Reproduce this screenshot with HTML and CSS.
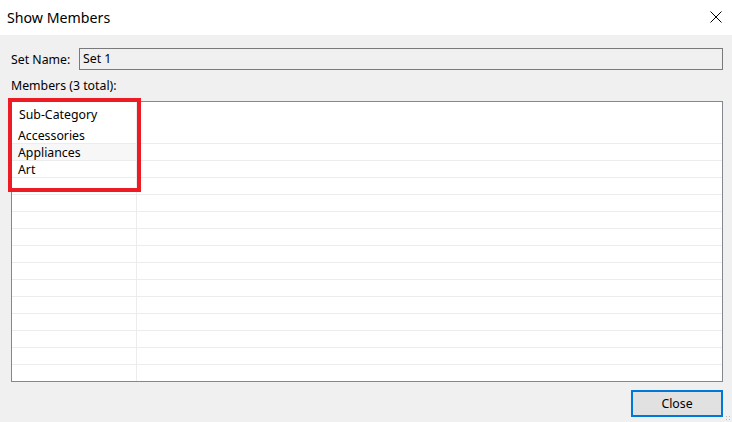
FILE: index.html
```html
<!DOCTYPE html>
<html lang="en">
<head>
  <meta charset="UTF-8" />
  <title>Show Members</title>
  <link rel="stylesheet" href="styles.css">
</head>
<body>
  <div class="dialog">
    <div class="titlebar">
      <span class="title">Show Members</span>
      <svg class="close-x" width="12" height="12" viewBox="0 0 12 12">
        <path d="M0.5 0.5 L11.5 11.5 M11.5 0.5 L0.5 11.5" stroke="#000" stroke-width="1" fill="none"/>
      </svg>
    </div>

    <div class="content">
      <div class="name-row">
        <label>Set Name:</label>
        <div class="name-box">Set 1</div>
      </div>
      <div class="members-label">Members (3 total):</div>

      <div class="grid-wrap">
        <div class="grid">
          <div class="row head"><div class="c1">Sub-Category</div><div class="c2"></div></div>
          <div class="row"><div class="c1">Accessories</div><div class="c2"></div></div>
          <div class="row alt"><div class="c1">Appliances</div><div class="c2"></div></div>
          <div class="row"><div class="c1">Art</div><div class="c2"></div></div>
          <div class="row"><div class="c1"></div><div class="c2"></div></div>
          <div class="row"><div class="c1"></div><div class="c2"></div></div>
          <div class="row"><div class="c1"></div><div class="c2"></div></div>
          <div class="row"><div class="c1"></div><div class="c2"></div></div>
          <div class="row"><div class="c1"></div><div class="c2"></div></div>
          <div class="row"><div class="c1"></div><div class="c2"></div></div>
          <div class="row"><div class="c1"></div><div class="c2"></div></div>
          <div class="row"><div class="c1"></div><div class="c2"></div></div>
          <div class="row"><div class="c1"></div><div class="c2"></div></div>
          <div class="row"><div class="c1"></div><div class="c2"></div></div>
          <div class="row"><div class="c1"></div><div class="c2"></div></div>
          <div class="row"><div class="c1"></div><div class="c2"></div></div>
        </div>
        <div class="highlight"></div>
      </div>

      <div class="footer">
        <button class="btn">Close</button>
      </div>
    </div>
    <div class="grip"></div>
  </div>
</body>
</html>
```

FILE: styles.css
```css
html, body {
  margin: 0;
  padding: 0;
}

body {
  font-family: 'Noto Sans', 'Open Sans', sans-serif;
  font-size: 12.3px;
  color: #000;
  background: #f0f0f0;
}

.dialog {
  width: 732px;
  height: 422px;
  display: flex;
  flex-direction: column;
  position: relative;
  overflow: hidden;
}

.titlebar {
  height: 35px;
  background: #fff;
  display: flex;
  align-items: center;
  justify-content: space-between;
  padding: 0 10px 0 7px;
  box-sizing: border-box;
}

.title {
  font-size: 14.2px;
  margin-top: -1px;
}

.close-x {
  margin-top: -1px;
}

.content {
  flex: 1;
  background: #f0f0f0;
  padding: 13px 9px 0 11px;
  display: flex;
  flex-direction: column;
}

.name-row {
  display: flex;
  align-items: center;
  height: 22px;
}

.name-row label {
  width: 68px;
}

.name-box {
  flex: 1;
  height: 22px;
  box-sizing: border-box;
  border: 1px solid #7a7a7a;
  background: #f0f0f0;
  padding: 0 3px;
  line-height: 19px;
}

.members-label {
  margin-top: 7px;
  height: 24px;
  line-height: 18px;
}

.grid-wrap {
  position: relative;
}

.grid {
  height: 281px;
  box-sizing: border-box;
  border: 1px solid #828790;
  background: #fff;
  overflow: hidden;
}

.row {
  display: flex;
  height: 17px;
  box-sizing: border-box;
  border-bottom: 1px solid #ececec;
  line-height: 18px;
}

.row.head {
  height: 25px;
  border-bottom: none;
  line-height: 26px;
}

.row.head .c1 {
  padding-left: 7px;
}

.row.alt .c1 {
  background: #f7f7f7;
}

.c1 {
  width: 125px;
  border-right: 1px solid #ececec;
  padding-left: 6px;
  box-sizing: border-box;
}

.c2 {
  flex: 1;
}

.highlight {
  position: absolute;
  left: -3px;
  top: -3px;
  width: 133px;
  height: 94px;
  box-sizing: border-box;
  border: 4px solid #ed1c24;
}

.footer {
  display: flex;
  justify-content: flex-end;
  padding-top: 8px;
}

.btn {
  width: 92px;
  height: 27px;
  font-family: inherit;
  font-size: 12.3px;
  background: #e1e1e1;
  border: 2px solid #0078d7;
  padding: 0;
}

.grip {
  position: absolute;
  right: 1px;
  bottom: 1px;
  width: 6px;
  height: 6px;
  background-image: radial-gradient(circle, #b8b8b8 0.8px, transparent 1px);
  background-size: 3px 3px;
}
```
